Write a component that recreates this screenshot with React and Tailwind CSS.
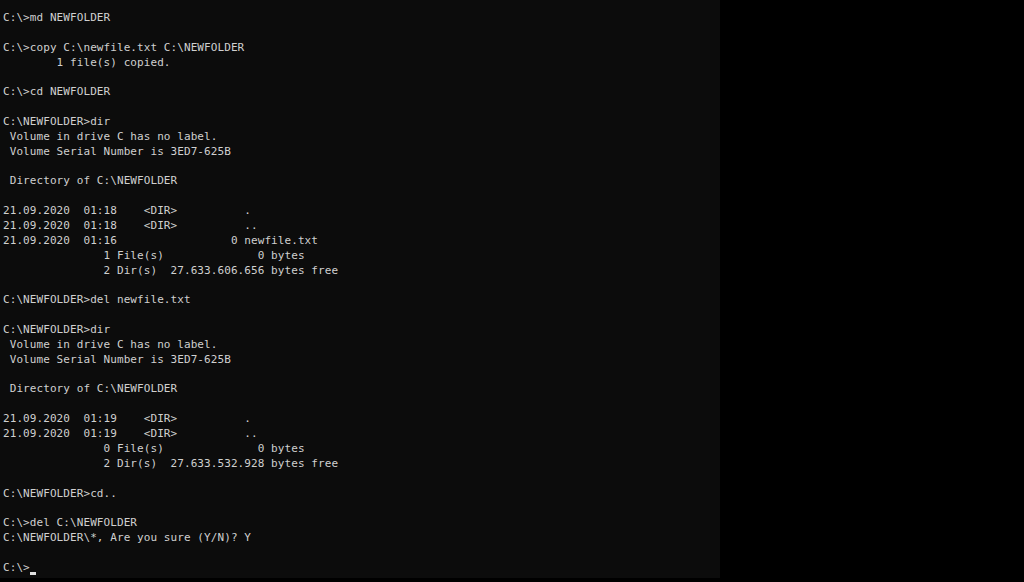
import React from "react";

const lines = [
  "C:\\>md NEWFOLDER",
  "",
  "C:\\>copy C:\\newfile.txt C:\\NEWFOLDER",
  "        1 file(s) copied.",
  "",
  "C:\\>cd NEWFOLDER",
  "",
  "C:\\NEWFOLDER>dir",
  " Volume in drive C has no label.",
  " Volume Serial Number is 3ED7-625B",
  "",
  " Directory of C:\\NEWFOLDER",
  "",
  "21.09.2020  01:18    <DIR>          .",
  "21.09.2020  01:18    <DIR>          ..",
  "21.09.2020  01:16                 0 newfile.txt",
  "               1 File(s)              0 bytes",
  "               2 Dir(s)  27.633.606.656 bytes free",
  "",
  "C:\\NEWFOLDER>del newfile.txt",
  "",
  "C:\\NEWFOLDER>dir",
  " Volume in drive C has no label.",
  " Volume Serial Number is 3ED7-625B",
  "",
  " Directory of C:\\NEWFOLDER",
  "",
  "21.09.2020  01:19    <DIR>          .",
  "21.09.2020  01:19    <DIR>          ..",
  "               0 File(s)              0 bytes",
  "               2 Dir(s)  27.633.532.928 bytes free",
  "",
  "C:\\NEWFOLDER>cd..",
  "",
  "C:\\>del C:\\NEWFOLDER",
  "C:\\NEWFOLDER\\*, Are you sure (Y/N)? Y",
  "",
];

export default function App() {
  return (
    <div className="w-[1024px] h-[582px] bg-black overflow-hidden">
      <div className="w-[720px] h-[578px] bg-[#0c0c0c] pt-[11px] pl-[3px] overflow-hidden">
        <pre
          className="m-0 text-[11px] leading-[14.86px] tracking-[0.08px] text-[#d0d0d0] whitespace-pre"
          style={{ fontFamily: '"DejaVu Sans Mono", "Liberation Mono", monospace' }}
        >
          {lines.map((l, i) => (
            <div key={i} className="h-[14.86px]">
              {l}
            </div>
          ))}
          <div className="h-[14.86px]">
            C:\&gt;
            <span className="inline-block w-[6.6px] h-[3px] bg-[#e0e0e0] align-[-4px]"></span>
          </div>
        </pre>
      </div>
    </div>
  );
}
